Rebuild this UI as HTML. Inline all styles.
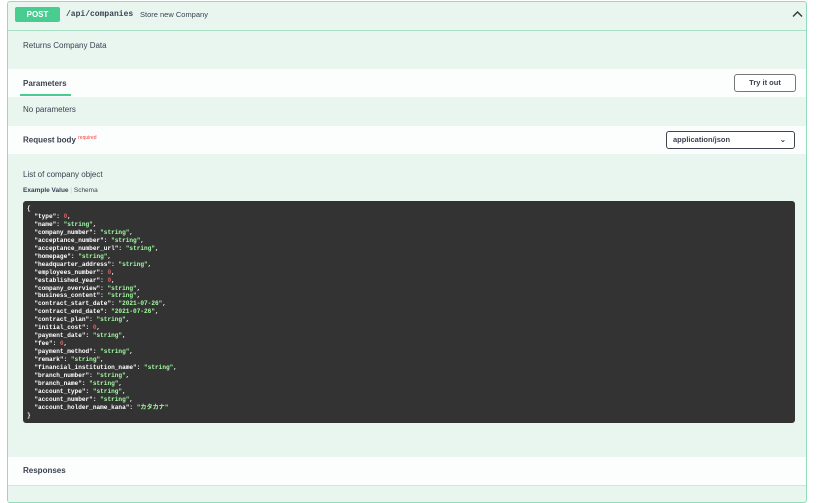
<!DOCTYPE html>
<html><head><style>
body{margin:0;width:825px;height:494px;overflow:hidden;background:#fff;font-family:"Liberation Sans",sans-serif;}
.op{position:absolute;left:7px;top:1px;width:798px;height:500px;border:1px solid #93dcbb;border-radius:3px;background:#e8f6ef;}
.hdr{position:absolute;left:0;top:0;width:798px;height:28px;border-bottom:1px solid #a8e0c6;}
.post{position:absolute;left:7px;top:5px;width:45px;height:15px;background:#49cc90;color:#fff;font-weight:bold;font-size:8px;text-align:center;line-height:15px;border-radius:2px;}
.path{position:absolute;left:58px;top:8px;font-family:"Liberation Mono",monospace;font-weight:bold;font-size:8px;color:#3b4151;}
.sum{position:absolute;left:132px;top:8px;font-size:7.5px;color:#3b4151;}
.t{position:absolute;font-size:8px;color:#3b4151;}
.band{position:absolute;left:0;width:798px;height:28px;background:rgba(255,255,255,.85);}
.b{font-weight:bold;}
.btn{position:absolute;border:1px solid #777;border-radius:3px;background:#fff;font-size:7.5px;font-weight:bold;color:#3b4151;}
pre{position:absolute;left:15px;top:199px;width:764px;height:218px;margin:0;padding:4px 4px 0 4px;background:#333;border-radius:3px;color:#fff;font-family:"Liberation Mono","Noto Sans CJK JP",monospace;font-size:6.1px;line-height:7.95px;font-weight:bold;}
.s{color:#a2fca2}.n{color:#d36363}
</style></head><body>
<div class="op">
<div class="hdr"><div class="post">POST</div><div class="path">/api/companies</div><div class="sum">Store new Company</div>
<svg style="position:absolute;left:784px;top:8px" width="11" height="8" viewBox="0 0 11 8"><path d="M1 6.5L5.5 2L10 6.5" fill="none" stroke="#333" stroke-width="1.4"/></svg></div>
<div class="t" style="left:15px;top:39px">Returns Company Data</div>
<div class="band" style="top:67px"><div class="t b" style="left:15px;top:10px">Parameters</div><div style="position:absolute;left:12px;top:25px;width:51px;height:2px;background:#49cc90"></div>
<div class="btn" style="left:726px;top:5px;width:60px;height:16px;line-height:16px;text-align:center">Try it out</div></div>
<div class="t" style="left:15px;top:103px">No parameters</div>
<div class="band" style="top:124px"><div class="t b" style="left:15px;top:9px">Request body <sup style="color:#f93e3e;font-size:5px;font-weight:normal">required</sup></div>
<div class="btn" style="left:658px;top:5px;width:127px;height:16px;line-height:16px;border-color:#41444e;border-width:1.5px"><span style="margin-left:6px">application/json</span><span style="position:absolute;right:8px;top:0">&#8964;</span></div></div>
<div class="t" style="left:15px;top:168px">List of company object</div>
<div class="t" style="left:15px;top:185px;font-size:6.5px"><b>Example Value</b> <span style="color:#ccc">|</span> Schema</div>
<pre>{
  "type": <span class="n">0</span>,
  "name": <span class="s">"string"</span>,
  "company_number": <span class="s">"string"</span>,
  "acceptance_number": <span class="s">"string"</span>,
  "acceptance_number_url": <span class="s">"string"</span>,
  "homepage": <span class="s">"string"</span>,
  "headquarter_address": <span class="s">"string"</span>,
  "employees_number": <span class="n">0</span>,
  "established_year": <span class="n">0</span>,
  "company_overview": <span class="s">"string"</span>,
  "business_content": <span class="s">"string"</span>,
  "contract_start_date": <span class="s">"2021-07-26"</span>,
  "contract_end_date": <span class="s">"2021-07-26"</span>,
  "contract_plan": <span class="s">"string"</span>,
  "initial_cost": <span class="n">0</span>,
  "payment_date": <span class="s">"string"</span>,
  "fee": <span class="n">0</span>,
  "payment_method": <span class="s">"string"</span>,
  "remark": <span class="s">"string"</span>,
  "financial_institution_name": <span class="s">"string"</span>,
  "branch_number": <span class="s">"string"</span>,
  "branch_name": <span class="s">"string"</span>,
  "account_type": <span class="s">"string"</span>,
  "account_number": <span class="s">"string"</span>,
  "account_holder_name_kana": <span class="s">"カタカナ"</span>
}</pre>
<div class="band" style="top:455px"><div class="t b" style="left:15px;top:9px">Responses</div></div>
<div style="position:absolute;left:0;top:483px;width:798px;height:1px;background:#cde9dc"></div>
</div>
</body></html>
